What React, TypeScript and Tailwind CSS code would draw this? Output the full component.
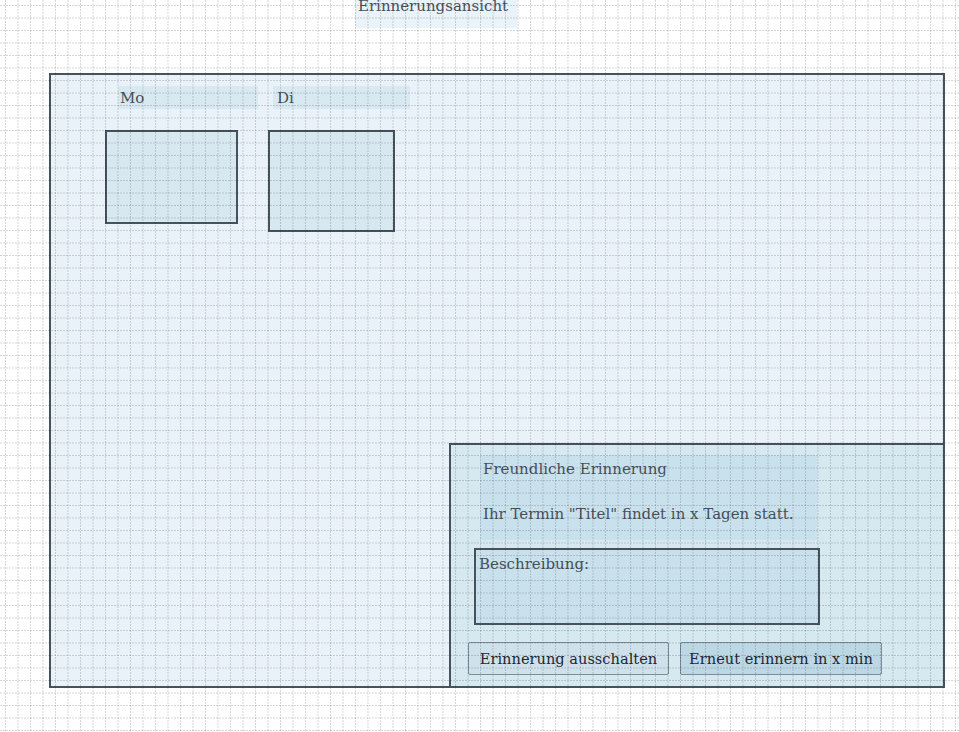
export default function App() {
  return (
    <div className="relative h-[732px] w-full overflow-hidden bg-white font-['DejaVu_Serif',serif] text-[15px] text-[#465058]">
      {/* Titel */}
      <div className="ml-[355px] h-[28px] w-[162px] bg-[#eaf3fa] pl-[3px] leading-[12px]">
        <span className="relative top-[0px]">Erinnerungsansicht</span>
      </div>

      {/* Kalender */}
      <div className="relative ml-[49px] mt-[45px] h-[615px] w-[896px] border-2 border-[#47535c] bg-[#eaf2f9]">
        <div className="flex pl-[54px] pt-[11px]">
          <div className="flex w-[155px] flex-col">
            <div className="ml-[13px] h-[23px] w-[140px] bg-[#d9e9f1] pl-[2px] leading-[25px]">Mo</div>
            <div className="mt-[21px] h-[94px] w-[133px] border-2 border-[#47535c] bg-[#d8e8f0]" />
          </div>
          <div className="ml-[8px] flex w-[142px] flex-col">
            <div className="ml-[5px] h-[23px] w-[137px] bg-[#d9e9f1] pl-[4px] leading-[25px]">Di</div>
            <div className="mt-[21px] h-[102px] w-[127px] border-2 border-[#47535c] bg-[#d8e8f0]" />
          </div>
        </div>

        {/* Erinnerungsdialog */}
        <div className="absolute bottom-[-2px] right-[-2px] h-[245px] w-[496px] border-2 border-[#47535c] bg-[#d6e8f0]">
          <div className="ml-[29px] mt-[10px] h-[85px] w-[337px] bg-[#c9e1ed] pl-[3px] pt-[2px]">
            <div className="leading-[24px]">Freundliche Erinnerung</div>
            <div className="mt-[21px] leading-[24px]">Ihr Termin "Titel" findet in x Tagen statt.</div>
          </div>
          <div className="ml-[23px] mt-[8px] h-[77px] w-[346px] border-2 border-[#47535c] bg-[#c9e1ed] pl-[3px] pt-[2px] leading-[24px]">
            Beschreibung:
          </div>
          <div className="ml-[17px] mt-[17px] flex gap-[11px]">
            <button className="h-[33px] w-[201px] rounded-[2px] border border-[#7c8d98] bg-[#cfe1ea] text-[14.6px] text-[#1c2933]">
              Erinnerung ausschalten
            </button>
            <button className="h-[33px] w-[202px] rounded-[2px] border border-[#7c8d98] bg-[#bdd8e5] text-[14.6px] text-[#1c2933]">
              Erneut erinnern in x min
            </button>
          </div>
        </div>
      </div>

      {/* Raster */}
      <div className="pointer-events-none absolute inset-0 bg-[conic-gradient(at_2px_1px,transparent_75%,rgba(0,0,0,0.16)_0),conic-gradient(at_1px_2px,transparent_75%,rgba(0,0,0,0.16)_0)] bg-[length:3px_12.5px,12.5px_3px] bg-[position:0_5px,5px_0]" />
    </div>
  )
}
